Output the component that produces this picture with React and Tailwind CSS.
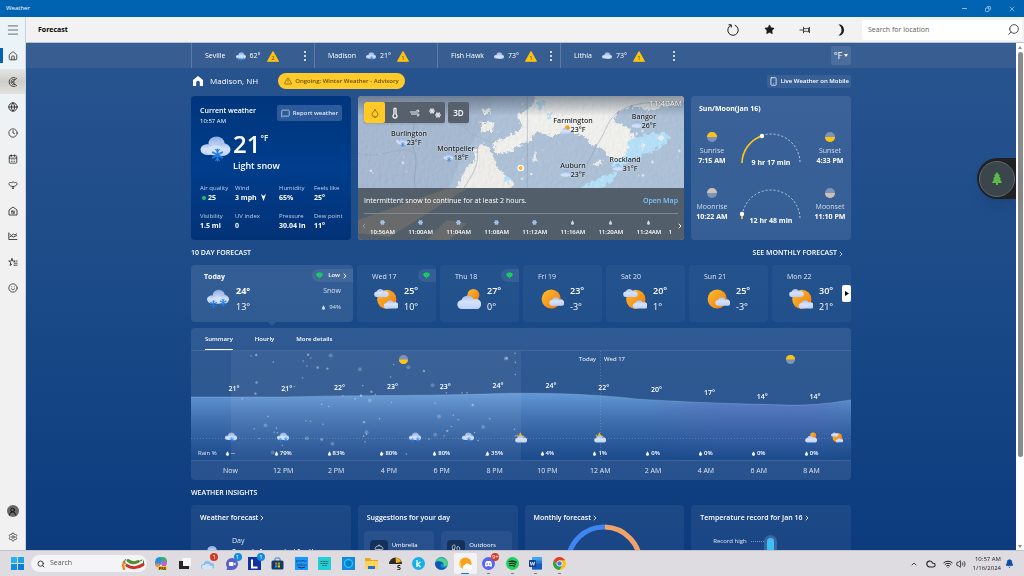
import React, { useState } from 'react';
import {
  Home, Clock, CalendarDays, Smile, Settings, UserRound, Globe,
  Menu, Search, Star, Minus, Copy, X, ChevronRight, ChevronLeft, ChevronUp,
  TriangleAlert, MessageSquare, Smartphone, Droplet, Thermometer, Wind, Snowflake,
  Wifi, Volume2, Bell, Umbrella, Footprints, Cloud,
} from 'lucide-react';

// --- data ---
const PLACES = [
  { name: 'Seville', temp: '62°', alerts: 2, icon: 'rain', menu: true },
  { name: 'Madison', temp: '21°', alerts: 1, icon: 'snow', menu: false },
  { name: 'Fish Hawk', temp: '73°', alerts: 1, icon: 'cloud', menu: true },
  { name: 'Lithia', temp: '73°', alerts: 1, icon: 'cloud', menu: true },
];

const STATS = [
  { label: 'Air quality', value: '25', dot: true },
  { label: 'Wind', value: '3 mph', arrow: true },
  { label: 'Humidity', value: '65%' },
  { label: 'Feels like', value: '25°' },
  { label: 'Visibility', value: '1.5 mi' },
  { label: 'UV index', value: '0' },
  { label: 'Pressure', value: '30.04 in' },
  { label: 'Dew point', value: '11°' },
];

const CITIES = [
  { name: 'Burlington', temp: '23°F', icon: 'snow', x: 51, y: 34 },
  { name: 'Montpelier', temp: '18°F', icon: 'snow', x: 98, y: 49 },
  { name: 'Farmington', temp: '23°F', icon: 'partly', x: 215, y: 21 },
  { name: 'Bangor', temp: '26°F', icon: 'cloud', x: 286, y: 17 },
  { name: 'Auburn', temp: '23°F', icon: 'cloud', x: 215, y: 66 },
  { name: 'Rockland', temp: '31°F', icon: 'cloud', x: 267, y: 60 },
];

const MAP_TIMES = ['10:56AM', '11:00AM', '11:04AM', '11:08AM', '11:12AM', '11:16AM', '11:20AM', '11:24AM'];

const DAYS = [
  { day: 'Wed 17', hi: '25°', lo: '10°', icon: 'mostly', pollen: true },
  { day: 'Thu 18', hi: '27°', lo: '0°', icon: 'partly', pollen: true },
  { day: 'Fri 19', hi: '23°', lo: '-3°', icon: 'sunny' },
  { day: 'Sat 20', hi: '20°', lo: '1°', icon: 'mostly' },
  { day: 'Sun 21', hi: '25°', lo: '-3°', icon: 'sunny' },
  { day: 'Mon 22', hi: '30°', lo: '21°', icon: 'mostly' },
];

const HOURS = [
  { time: 'Now', temp: '21°', rain: '--', y: 33 },
  { time: '12 PM', temp: '21°', rain: '79%', y: 33 },
  { time: '2 PM', temp: '22°', rain: '83%', y: 32 },
  { time: '4 PM', temp: '23°', rain: '80%', y: 31 },
  { time: '6 PM', temp: '23°', rain: '80%', y: 31 },
  { time: '8 PM', temp: '24°', rain: '35%', y: 30 },
  { time: '10 PM', temp: '24°', rain: '4%', y: 30 },
  { time: '12 AM', temp: '22°', rain: '1%', y: 32 },
  { time: '2 AM', temp: '20°', rain: '0%', y: 34 },
  { time: '4 AM', temp: '17°', rain: '0%', y: 37 },
  { time: '6 AM', temp: '14°', rain: '0%', y: 41 },
  { time: '8 AM', temp: '14°', rain: '0%', y: 41 },
];

// x is the centre of the icon on the 660 wide chart
const HOUR_ICONS = [
  { x: 40, icon: 'snow' },
  { x: 92, icon: 'heavy' },
  { x: 224, icon: 'heavy' },
  { x: 277, icon: 'snow' },
  { x: 330, icon: 'night' },
  { x: 409, icon: 'night' },
  { x: 620, icon: 'partly' },
  { x: 646, icon: 'mostly' },
];

const rand = (n) => {
  const v = Math.sin(n * 127.1 + 11.7) * 43758.5453;
  return v - Math.floor(v);
};

const FLAKES = Array.from({ length: 84 }, (_, i) => ({
  x: 42 + rand(i) * 286,
  y: 2 + rand(i + 200) * 103,
  r: i % 6 === 0 ? 2 : i % 3 === 0 ? 1.2 : 0.8,
  o: i % 6 === 0 ? 0.22 : 0.4,
}));

const MAP_FLAKES = Array.from({ length: 34 }, (_, i) => ({
  x: 30 + rand(i + 400) * 960,
  y: 24 + rand(i + 600) * 260,
}));

// --- weather icons ---
const CLOUD_PATH = 'M7 17a5 5 0 0 1-.6-10A7 7 0 0 1 19.500 6.200A5.500 5.500 0 0 1 25 17Z';

function Defs() {
  return (
    <svg width="0" height="0" className="absolute" aria-hidden="true">
      <defs>
        <linearGradient id="cloud" x1="0" y1="0" x2="0" y2="1">
          <stop offset="0" stopColor="#a3bdf0" />
          <stop offset="0.45" stopColor="#d5e2fa" />
          <stop offset="1" stopColor="#bfd2f6" />
        </linearGradient>
        <linearGradient id="cloudBack" x1="0" y1="0" x2="0" y2="1">
          <stop offset="0" stopColor="#8babe6" />
          <stop offset="1" stopColor="#e2ebfb" />
        </linearGradient>
        <linearGradient id="sun" x1="0" y1="0" x2="1" y2="1">
          <stop offset="0" stopColor="#ffbe2e" />
          <stop offset="1" stopColor="#f0780f" />
        </linearGradient>
      </defs>
    </svg>
  );
}

function Flake({ x, y, s = 4 }) {
  return (
    <g transform={`translate(${x} ${y})`} stroke="#1f7fe8" strokeWidth={s * 0.32} strokeLinecap="round" fill="none">
      <path d={`M0 ${-s}V${s}M${-s * 0.87} ${-s / 2}L${s * 0.87} ${s / 2}M${-s * 0.87} ${s / 2}L${s * 0.87} ${-s / 2}`} />
      <path strokeWidth={s * 0.2} d={`M${-s * 0.35} ${-s}L0 ${-s * 0.6}L${s * 0.35} ${-s}M${-s * 0.35} ${s}L0 ${s * 0.6}L${s * 0.35} ${s}`} />
    </g>
  );
}

function WeatherIcon({ type, className }) {
  return (
    <svg viewBox="0 0 30 26" className={className} aria-hidden="true">
      {type === 'sunny' && (
        <>
          <circle cx="14" cy="13" r="12" fill="url(#sun)" />
          <path d={CLOUD_PATH} fill="url(#cloud)" transform="translate(10.500 9.500) scale(.7)" />
        </>
      )}
      {type === 'mostly' && (
        <>
          <circle cx="16" cy="13.500" r="12" fill="url(#sun)" />
          <path d={CLOUD_PATH} fill="url(#cloud)" transform="translate(-1 -1) scale(.68)" />
          <path d={CLOUD_PATH} fill="url(#cloud)" transform="translate(11 13) scale(.7)" />
        </>
      )}
      {type === 'partly' && (
        <>
          <circle cx="20.500" cy="8" r="7.500" fill="url(#sun)" />
          <path d={CLOUD_PATH} fill="url(#cloud)" transform="translate(-1.500 6.500) scale(1.120)" />
        </>
      )}
      {type === 'night' && (
        <>
          <path d="M14 0c1 6 4 9 10 9-2 4-6 6-10 4s-5-8 0-13ZM2 9l4-1 1-4 1 4 4 1-4 1-1 4-1-4Z" fill="#f3b431" />
          <path d={CLOUD_PATH} fill="url(#cloud)" transform="translate(-1.500 6.500) scale(1.120)" />
        </>
      )}
      {['cloud', 'snow', 'heavy', 'rain'].includes(type) && (
        <>
          <ellipse cx="16" cy="7.500" rx="8" ry="7" fill="url(#cloudBack)" />
          <ellipse cx="7.500" cy="13.500" rx="7.500" ry="5.500" fill="url(#cloud)" />
          <ellipse cx="22" cy="13.500" rx="8" ry="6.500" fill="url(#cloud)" />
          <ellipse cx="15" cy="14.500" rx="9" ry="5" fill="#d3e0f9" />
        </>
      )}
      {type === 'snow' && <Flake x={17} y={19} s={5.5} />}
      {type === 'heavy' && (
        <>
          <Flake x={9} y={20} s={4.5} />
          <Flake x={22} y={18} s={4.5} />
        </>
      )}
      {type === 'rain' && <path d="M8 17v6M15 18v6M22 17v6" stroke="#3d9bff" strokeWidth="3" strokeLinecap="round" />}
    </svg>
  );
}

// half disc used by the sunrise / sunset marks
function HalfDisc({ color, up, className }) {
  return (
    <svg viewBox="0 0 10 10" className={className} aria-hidden="true">
      <circle cx="5" cy="5" r="5" fill="#7d93b8" />
      <path d={up ? 'M0 5a5 5 0 0 1 10 0Z' : 'M0 5a5 5 0 0 0 10 0Z'} fill={color} />
    </svg>
  );
}

function Warning({ count }) {
  return (
    <svg viewBox="0 0 12 11" className="h-[11px] w-3" aria-label={`${count} alerts`}>
      <path d="M6 .8 11.300 10.200H.7Z" fill="#fdc40f" stroke="#fdc40f" strokeWidth="1.200" strokeLinejoin="round" />
      <text x="6" y="9" textAnchor="middle" fontSize="6" fill="#5b4400">{count}</text>
    </svg>
  );
}

function Drop({ className }) {
  return (
    <svg viewBox="0 0 4 6" className={className} aria-hidden="true">
      <path d="M2 0C3 2 4 3 4 4a2 2 0 0 1-4 0C0 3 1 2 2 0Z" fill="currentColor" />
    </svg>
  );
}

function Pollen() {
  return (
    <svg viewBox="0 0 7 7" className="size-[7px]" aria-hidden="true">
      <path d="M3.500 7V3" stroke="#19a85f" strokeWidth=".8" />
      <path d="M.3 2.500C.8 1 2 .5 3.500.5S6.200 1 6.700 2.500C6.500 4.300 5 5.300 3.500 5.500 2 5.300.5 4.300.3 2.500Z" fill="#17d562" />
      <path d="M2 2.300h.8M4.200 2.300H5M3.100 3.800h.8" stroke="#0d8c4d" strokeWidth=".6" />
    </svg>
  );
}

// --- shell ---
function TitleBar() {
  return (
    <div className="flex h-[17px] shrink-0 items-center bg-[#0063b1] text-white">
      <span className="px-1.5 text-[6px]">Weather</span>
      <div className="ml-auto flex">
        <button aria-label="Minimize" className="flex h-[17px] w-6 items-center justify-center"><Minus size={7} /></button>
        <button aria-label="Restore" className="flex h-[17px] w-6 items-center justify-center"><Copy size={6} className="-scale-x-100" /></button>
        <button aria-label="Close" className="flex h-[17px] w-6 items-center justify-center"><X size={8} strokeWidth={1.5} /></button>
      </div>
    </div>
  );
}

function RadarIcon() {
  return (
    <svg viewBox="0 0 10 10" className="size-[10px]" fill="none" stroke="#4a4a4a" strokeWidth="1">
      <path d="M7.500.9A4.500 4.500 0 1 0 7.500 9.100M9 1 4.500 5l4.500 4M7 2.600A2.700 2.700 0 1 0 7 7.400" />
      <path d="M6.300 4.300a1 1 0 1 0 0 1.400" />
    </svg>
  );
}

const NAV = [
  { label: 'Forecast', icon: <Home size={10} strokeWidth={2} /> },
  { label: 'Maps', icon: <RadarIcon /> },
  { label: '3D Maps', icon: <Globe size={10} strokeWidth={2.4} /> },
  { label: 'Hourly Forecast', icon: <Clock size={10} strokeWidth={2} /> },
  { label: 'Monthly Forecast', icon: <CalendarDays size={10} strokeWidth={2} /> },
  {
    label: 'Pollen',
    icon: (
      <svg viewBox="0 0 10 10" className="size-[10px]" fill="none" stroke="currentColor" strokeWidth=".9">
        <path d="M.8 3.500C2 2 3 2.500 3.500 2.800 4 1.700 6 1.700 6.500 2.800 7 2.500 8 2 9.200 3.500 9 5.500 7 6.300 5 6.500 3 6.300 1 5.500.8 3.500ZM5 6.500V9M3.800 7.600 5 8.600l1.200-1" />
      </svg>
    ),
  },
  {
    label: 'Life',
    icon: (
      <svg viewBox="0 0 10 10" className="size-[10px]" fill="none" stroke="currentColor" strokeWidth=".9">
        <path d="M1 9V4L5 1l4 3V9ZM3 5.200h4M3 7h4M4.200 4.500v1.300M5.900 6.300v1.300" />
      </svg>
    ),
  },
  {
    label: 'Historical Weather',
    icon: (
      <svg viewBox="0 0 10 10" className="size-[10px]" fill="none" stroke="currentColor" strokeWidth=".9">
        <path d="M.8 1.500v7h8.500M1.500 6 3.500 5l2 1L9 4.500M1.500 3 3.500 4.500 5.500 3 7 4l2-1.500" />
      </svg>
    ),
  },
  {
    label: 'Favorites',
    icon: (
      <svg viewBox="0 0 10 10" className="size-[10px]" fill="none" stroke="currentColor" strokeWidth=".9">
        <path d="M5.500 5.500 7 4H4.800L4 1.300 3.200 4H.7l2 1.700L2 8.500 4 7M6 6.200h3.500M5.500 8.200h4M7.500 4h2" />
      </svg>
    ),
  },
  { label: 'Send Feedback', icon: <Smile size={10} strokeWidth={2} /> },
];

function Sidebar() {
  return (
    <nav className="flex w-[26px] shrink-0 flex-col justify-between border-r border-[#c9d3e0] bg-linear-to-b from-[#e9f4f9] via-[#f1f1f1] via-30% to-[#f1f1f1] text-[#333]">
      <div className="flex h-[284px] flex-col">
        <button aria-label="Menu" className="flex flex-1 items-center justify-center"><Menu size={14} strokeWidth={1.2} /></button>
        {NAV.map((item, i) => (
          <a
            key={item.label}
            href="#"
            aria-label={item.label}
            className={
              i === 0
                ? 'relative flex flex-1 items-center justify-center before:absolute before:left-0 before:h-[15px] before:w-[3px] before:bg-[#0063b1]'
                : i === 1
                  ? 'flex flex-1 items-center justify-center bg-linear-to-b from-[#e3e6e6] via-[#cfcdc8] to-[#e2e2e0]'
                  : 'flex flex-1 items-center justify-center'
            }
          >
            {item.icon}
          </a>
        ))}
      </div>
      <div>
        <button aria-label="Account" className="flex h-[26px] w-full items-center justify-center">
          <span className="flex size-3 items-center justify-center rounded-full bg-[#696969] text-black"><UserRound size={9} /></span>
        </button>
        <button aria-label="Settings" className="flex h-[26px] w-full items-center justify-center"><Settings size={10} strokeWidth={1.8} /></button>
      </div>
    </nav>
  );
}

function Header() {
  return (
    <header className="flex h-[26px] shrink-0 items-center border-b border-[#b4c3da] bg-[#f2f2f2] pr-0.5 pl-3 text-[#1c1c1c]">
      <h1 className="pt-0.5 text-[7px] font-bold text-black">Forecast</h1>
      <div className="ml-auto flex items-center">
        <button aria-label="Refresh" className="flex w-9 justify-center">
          <svg viewBox="0 0 12 12" className="size-3" fill="none" stroke="currentColor" strokeWidth="1">
            <path d="M7.800 1.200a5.200 5.200 0 1 1-3.800.1M1.500.8h2.800v2.800" />
          </svg>
        </button>
        <button aria-label="Favorite" className="flex w-9 justify-center"><Star size={11} fill="currentColor" strokeWidth={1} /></button>
        <button aria-label="Pin" className="flex w-9 justify-center">
          <svg viewBox="0 0 12 8" className="h-2 w-3" fill="none" stroke="currentColor" strokeWidth=".8">
            <path d="M.5 4h4M4.500.8v6.400M4.500 2.300c2 1 3.500.2 5-.3v4c-1.500-.5-3-1.300-5-.3M10.500 1v6" />
          </svg>
        </button>
        <button aria-label="Dark mode" className="flex w-9 justify-center">
          <svg viewBox="0 0 8 12" className="h-3 w-2"><path d="M1.500.5C5 0 7 3 7 6s-2 6-5.500 5.500C4 9.500 4.500 8 4.500 6S4 2.500 1.500.5Z" fill="currentColor" /></svg>
        </button>
      </div>
      <label className="ml-[3px] flex h-5 w-40 items-center rounded-xs bg-white px-1.5">
        <input type="search" aria-label="Search for location" placeholder="Search for location" className="min-w-0 flex-1 pt-0.5 text-[7px] outline-none placeholder:text-[#5c5c5c]" />
        <Search size={13} strokeWidth={1.6} className="-mr-1 -scale-x-100 text-[#333]" />
      </label>
    </header>
  );
}

function PlacesBar() {
  return (
    <div className="bg-[#385d90]">
      <div className="mx-auto flex h-[25px] w-[660px] items-center text-[7px]">
        {PLACES.map((p) => (
          <div key={p.name} className="flex h-full w-[123px] items-center border-l border-[#5c7ba6] pr-1.5 pl-[13px]">
            <a href="#" className="flex items-center pt-0.5">
              <span>{p.name}</span>
              <WeatherIcon type={p.icon} className="ml-2.5 h-[9px] w-[10px]" />
              <span className="mr-1.5 ml-1">{p.temp}</span>
              <Warning count={p.alerts} />
            </a>
            {p.menu && (
              <button aria-label={`${p.name} options`} className="ml-auto flex flex-col gap-0.5 px-0.5">
                <i className="size-[2px] rounded-full bg-white" />
                <i className="size-[2px] rounded-full bg-white" />
                <i className="size-[2px] rounded-full bg-white" />
              </button>
            )}
          </div>
        ))}
        <button className="ml-auto flex h-[19px] w-5 items-center justify-center gap-0.5 rounded-xs bg-[#4c6e9d] text-[9px]">
          °F
          <svg viewBox="0 0 4 3" className="h-[3px] w-1"><path d="M0 0h4L2 3Z" fill="white" /></svg>
        </button>
      </div>
    </div>
  );
}

// --- top cards ---
function CurrentWeather() {
  return (
    <section className="w-40 rounded bg-linear-to-b from-[#00367c] via-[#003d8c] via-50% to-[#033276] px-[9px] pt-[9px]">
      <div className="flex justify-between">
        <div className="pt-px leading-[10px]">
          <h2 className="text-[7px] font-semibold">Current weather</h2>
          <p className="text-[6px]">10:57 AM</p>
        </div>
        <button className="flex h-4 items-center gap-[3px] rounded-xs bg-[#2d5a9b] px-1 text-[6px] font-semibold text-[#e3e9f3]">
          <MessageSquare size={9} strokeWidth={1.8} />
          Report weather
        </button>
      </div>
      <div className="flex items-start">
        <WeatherIcon type="snow" className="mt-[10px] h-[26px] w-[31px]" />
        <div className="pt-1 pl-0.5">
          <div className="flex items-start font-semibold">
            <span className="text-[24px] leading-[28px]">21</span>
            <sup className="top-0 pt-1 text-[8px] leading-[8px]">°F</sup>
          </div>
          <p className="pt-0.5 text-[9px] leading-[12px] font-semibold">Light snow</p>
        </div>
      </div>
      <dl className="grid grid-cols-[35px_44px_35px_28px] gap-y-2.5 pt-3 whitespace-nowrap">
        {STATS.map((s) => (
          <div key={s.label} className="leading-[9px]">
            <dt className="text-[6px] text-[#c3d2ea]">{s.label}</dt>
            <dd className="flex items-center text-[7px] font-bold">
              {s.dot && <i className="mr-0.5 ml-0.5 size-[4px] rounded-full bg-[#1fc36b]" />}
              {s.value}
              {s.arrow && <svg viewBox="0 0 5 7" className="ml-1 h-[7px] w-[5px]"><path d="M0 0 2.500 2 5 0 2.500 7Z" fill="white" /></svg>}
            </dd>
          </div>
        ))}
      </dl>
    </section>
  );
}

function MapArt() {
  return (
    <svg viewBox="24 18 978 432" preserveAspectRatio="xMidYMid slice" className="absolute inset-0 size-full" aria-hidden="true">
      <defs>
        <filter id="coast" x="-5%" y="-5%" width="110%" height="110%">
          <feTurbulence type="fractalNoise" baseFrequency="0.09" numOctaves="3" seed="6" />
          <feDisplacementMap in="SourceGraphic" scale="22" xChannelSelector="R" yChannelSelector="G" />
        </filter>
        <filter id="relief" x="0" y="0" width="100%" height="100%">
          <feTurbulence type="fractalNoise" baseFrequency="0.1 0.07" numOctaves="3" seed="9" />
          <feDiffuseLighting surfaceScale="2" lightingColor="#ffffff">
            <feDistantLight azimuth="215" elevation="62" />
          </feDiffuseLighting>
        </filter>
        <linearGradient id="mapShade" x1="0" y1="0" x2="0" y2="1">
          <stop offset="0" stopColor="#49576a" stopOpacity=".6" />
          <stop offset="1" stopColor="#49576a" stopOpacity="0" />
        </linearGradient>
      </defs>
      <rect x="24" y="18" width="978" height="432" fill="#b0c4da" />
      <path d="M24 18h400v60l-80 110-60 130H24Z" fill="#a6b9d1" opacity=".7" />
      <g filter="url(#coast)">
        <path fill="#f3f3f0" d="M560 0 545 50 500 78 520 110 480 140 430 158 436 192 470 188 505 170 545 150 560 122 610 142 650 118 700 140 725 165 760 175 800 235 830 190 856 140 832 112 790 92 800 70 850 50 900 62 1030 30V0Z" />
        <path fill="#f1f0ed" d="M380 165 412 168 430 200 442 232 470 258 490 272 478 330 300 340 330 270 350 232 372 215Z" />
        <path fill="#f1f0ed" d="M392 96h38v30h-38ZM398 56h24v16h-24ZM732 212h26v12h-26ZM548 190h12v22h-12Z" />
        <path fill="#b7e3fb" d="M838 146 900 132 940 128 962 138 950 158 910 184 880 196 850 205 812 232 780 226 826 196Z" />
        <path fill="#b7e3fb" d="M680 300 730 272 770 256 804 244 790 272 750 300ZM560 36l20-8 6 22-22 8ZM590 70h22l-12 18ZM462 260l20 5-8 14-14-6Z" />
        <path fill="#f1f1ee" d="M874 150l14 20-12 12ZM920 150l14-16 6 20Z" />
      </g>
      <g fill="none" stroke="#8798ad" strokeWidth="2" opacity=".7">
        <path d="M186 70c16 40-10 70 6 110s-6 80 4 114M532 18v276M1002 40c-90-6-150-4-190 22-40 20-40 60-70 100l-30 60M382 170c8 60-20 90-40 124" />
        <path d="M24 190c80 20 120-30 170 0M300 60l60 70 70 30" strokeDasharray="5 4" />
      </g>
      <rect x="24" y="18" width="978" height="432" filter="url(#relief)" opacity=".35" style={{ mixBlendMode: 'multiply' }} />
      {MAP_FLAKES.map((f, i) => <circle key={i} cx={f.x} cy={f.y} r={i % 3 ? 2 : 4} fill="white" opacity=".6" />)}
      <rect x="24" y="18" width="978" height="60" fill="url(#mapShade)" />
      <rect x="24" y="294" width="978" height="156" fill="#33516f" />
      <path d="M24 430V390L290 296h60L120 440ZM230 450l60-60 60 10-50 50Z" fill="#e0a868" />
      <circle cx="512" cy="234" r="10" fill="white" />
      <circle cx="512" cy="234" r="6" fill="#f4b832" />
    </svg>
  );
}

function MapCard() {
  return (
    <section className="relative flex min-w-0 flex-1 flex-col overflow-hidden rounded">
      <MapArt />
      {CITIES.map((c) => (
        <div
          key={c.name}
          className="absolute -translate-x-1/2 text-center text-[7px] leading-[8px] font-semibold whitespace-nowrap text-[#26292e] [text-shadow:0_0_2px_white]"
          style={{ left: c.x, top: c.y }}
        >
          {c.name}
          <div className="flex items-center justify-center">
            <WeatherIcon type={c.icon} className="h-[9px] w-[10px]" />
            {c.temp}
          </div>
        </div>
      ))}
      <span className="absolute top-0.5 right-0.5 text-[8px] leading-[9px] text-[#eef1f5] [text-shadow:0_0_2px_#444]">11:40AM</span>
      <div className="relative flex flex-1 items-start gap-[3px] p-1.5">
        <div className="flex overflow-hidden rounded-xs bg-[#56616d] shadow">
          <button aria-label="Precipitation" className="flex size-[21px] items-center justify-center rounded-xs bg-[#ffca28] text-[#5a4300]"><Droplet size={10} strokeWidth={1.5} /></button>
          <button aria-label="Temperature" className="flex h-[21px] w-5 items-center justify-center"><Thermometer size={12} strokeWidth={2.5} /></button>
          <button aria-label="Wind" className="flex h-[21px] w-5 items-center justify-center">
            <svg viewBox="0 0 10 8" className="h-2 w-2.5" fill="none" stroke="currentColor" strokeWidth=".9"><path d="M0 3h7.500q2 0 1.500-1.200T6.500 1.500M1 5h7q1.500.2 1 1.300T7 6.800" /></svg>
          </button>
          <button aria-label="Snow" className="flex h-[21px] w-5 items-center justify-center">
            <Snowflake size={6} className="mb-1" strokeWidth={3} />
            <Snowflake size={6} className="mt-1" strokeWidth={3} />
          </button>
        </div>
        <button className="size-[21px] rounded-xs bg-[#56616d] text-[8px] font-semibold shadow">3D</button>
      </div>
      <div className="relative h-[52px] bg-[#56616b]/88 px-1.5 pt-[7px]">
        <div className="flex items-center justify-between border-b border-[#7b8791] pb-[7px] text-[7px] leading-[11px]">
          <p>Intermittent snow to continue for at least 2 hours.</p>
          <a href="#" className="font-semibold text-[#7cc6ff]">Open Map</a>
        </div>
        <div className="flex items-center">
          <button aria-label="Earlier" className="-mr-1 -ml-1 text-[#a7b0ba]"><ChevronLeft size={8} /></button>
          <ol className="flex flex-1 justify-between overflow-hidden pt-1">
            {MAP_TIMES.map((t, i) => (
              <li key={t} className="flex w-[37px] shrink-0 flex-col items-center text-[6px] leading-[10px] font-semibold">
                {i < 5 ? <Snowflake size={5} strokeWidth={4} className="mt-0.5 mb-0.5 text-[#a9d2fa]" /> : <Drop className="mt-0.5 mb-0.5 h-[5px] w-[3px] text-[#d6dbe0]" />}
                {t}
              </li>
            ))}
            <li className="pt-[9px] pr-1 text-[6px] leading-[10px] font-semibold">1</li>
          </ol>
          <button aria-label="Later" className="-mr-1.5"><ChevronRight size={8} strokeWidth={3} /></button>
        </div>
      </div>
    </section>
  );
}

function ArcRow({ color, left, right, middle, sun }) {
  return (
    <div className="flex h-14 items-start justify-between text-center">
      <div className="flex w-[42px] flex-col items-center text-[7px] leading-[10px]">
        <HalfDisc color={color} up className="mb-1 size-2.5" />
        <span className="text-[#d3dcea]">{left[0]}</span>
        <b>{left[1]}</b>
      </div>
      <div className="flex flex-col items-center">
        <svg viewBox="0 0 64 32" className="h-8 w-16" fill="none">
          <path d="M3 31a29 29 0 0 1 58 0" stroke="#c3cfe0" strokeDasharray="2 2" strokeWidth="1" />
          {sun ? (
            <>
              <path d="M3 31A29 29 0 0 1 23 4" stroke="#fdc40f" strokeWidth="1.600" />
              <circle cx="23" cy="4" r="2.200" fill="white" />
            </>
          ) : (
            <>
              <path d="M3 31v-5" stroke="#fdc40f" strokeWidth="1.600" />
              <circle cx="3" cy="26" r="2.200" fill="white" />
            </>
          )}
        </svg>
        <b className={sun ? '-mt-1.5 text-[7px] leading-[10px]' : '-mt-1 text-[7px] leading-[10px]'}>{middle}</b>
      </div>
      <div className="flex w-[42px] flex-col items-center text-[7px] leading-[10px]">
        <HalfDisc color={color} className="mb-1 size-2.5" />
        <span className="text-[#d3dcea]">{right[0]}</span>
        <b>{right[1]}</b>
      </div>
    </div>
  );
}

function SunMoon() {
  return (
    <section className="w-40 rounded bg-white/10">
      <h2 className="px-2 pt-2 pb-[18px] text-[7px] leading-[10px] font-bold">Sun/Moon(Jan 16)</h2>
      <ArcRow sun color="#fdc40f" left={['Sunrise', '7:15 AM']} right={['Sunset', '4:33 PM']} middle="9 hr 17 min" />
      <ArcRow color="#cdbfb4" left={['Moonrise', '10:22 AM']} right={['Moonset', '11:10 PM']} middle="12 hr 48 min" />
    </section>
  );
}

// --- 10 day forecast ---
function Temps({ hi, lo, bold }) {
  return (
    <div className="pt-px text-[9px] leading-4">
      <div className={bold ? 'font-bold' : 'font-semibold'}>{hi}</div>
      <div>{lo}</div>
    </div>
  );
}

function TenDay() {
  return (
    <section>
      <div className="flex h-[25px] items-center justify-between pt-0.5 text-[7px] font-semibold">
        <h2>10 DAY FORECAST</h2>
        <a href="#" className="flex items-center pr-1.5">SEE MONTHLY FORECAST<ChevronRight size={8} /></a>
      </div>
      <div className="relative flex h-[57px] gap-1">
        <div className="relative w-[162px] rounded bg-white/10 pt-1.5 pl-[13px] after:absolute after:top-full after:left-[77px] after:border-x-4 after:border-t-4 after:border-x-transparent after:border-t-white/10">
          <div className="flex items-center justify-between">
            <span className="text-[7px] leading-[11px] font-bold">Today</span>
            <button className="-mt-1 -mb-0.5 flex h-[13px] items-center gap-[5px] rounded-l-full bg-white/8 pr-1 pl-1 text-[6px] font-semibold">
              <Pollen />
              Low
              <ChevronRight size={8} strokeWidth={3} className="-ml-1" />
            </button>
          </div>
          <div className="flex">
            <WeatherIcon type="heavy" className="mt-1.5 mr-[7px] ml-[3px] h-[22px] w-[22px]" />
            <Temps hi="24°" lo="13°" bold />
            <div className="ml-auto pt-px pr-3 text-right text-[7px] leading-4 text-[#d8e1ee]">
              <div>Snow</div>
              <div className="flex items-center justify-end gap-1 text-[6px] leading-4"><Drop className="h-[5px] w-[3px]" />94%</div>
            </div>
          </div>
        </div>
        {DAYS.map((d) => (
          <a key={d.day} href="#" className="min-w-0 flex-1 rounded bg-white/4 pt-1.5">
            <div className="flex items-center justify-between pl-[15px] text-[#dde5f0]">
              <span className="text-[7px] leading-[11px]">{d.day}</span>
              {d.pollen && (
                <span className="-mt-1 -mb-0.5 flex h-[13px] items-center rounded-l-full bg-white/8 pr-1.5 pl-[5px]"><Pollen /></span>
              )}
            </div>
            <div className="flex pl-[17px]">
              <WeatherIcon type={d.icon} className="mt-1.5 mr-1.5 h-[22px] w-6" />
              <Temps hi={d.hi} lo={d.lo} />
            </div>
          </a>
        ))}
        <button aria-label="Next days" className="absolute top-5 right-0 flex h-[17px] w-[9px] items-center justify-center rounded-xs bg-white">
          <svg viewBox="0 0 4 5" className="h-[5px] w-1"><path d="M0 0l4 2.500L0 5Z" fill="black" /></svg>
        </button>
      </div>
    </section>
  );
}

// --- hourly chart ---
function HourlyChart() {
  const [tab, setTab] = useState('Summary');
  return (
    <section className="mt-1.5 overflow-hidden rounded bg-white/10">
      <div role="tablist" className="flex h-[23px] gap-[22px] border-b border-white/10 px-3.5 text-[6px] font-semibold">
        {['Summary', 'Hourly', 'More details'].map((t) => (
          <button key={t} role="tab" aria-selected={tab === t} onClick={() => setTab(t)} className={tab === t ? 'border-b border-white pt-0.5' : 'border-b border-transparent pt-0.5'}>
            {t}
          </button>
        ))}
      </div>
      <div className="relative h-[109px]">
        <svg viewBox="0 0 660 109" preserveAspectRatio="none" className="absolute inset-0 size-full" aria-hidden="true">
          <defs>
            <linearGradient id="wave" x1="0" y1="0" x2="0" y2="1">
              <stop offset="0" stopColor="#6a9fdd" stopOpacity=".9" />
              <stop offset=".4" stopColor="#4a7bbd" stopOpacity=".7" />
              <stop offset="1" stopColor="#12458a" stopOpacity=".6" />
            </linearGradient>
            <linearGradient id="dusk" x1="0" y1="0" x2="1" y2="0">
              <stop offset=".7" stopColor="#5a5fb4" stopOpacity="0" />
              <stop offset=".8" stopColor="#5a5fb4" stopOpacity=".35" />
              <stop offset=".95" stopColor="#5a5fb4" stopOpacity=".35" />
              <stop offset="1" stopColor="#5a5fb4" stopOpacity="0" />
            </linearGradient>
            <linearGradient id="fade" x1="0" y1="0" x2="0" y2="1">
              <stop offset=".4" stopColor="white" />
              <stop offset="1" stopColor="black" />
            </linearGradient>
            <mask id="duskMask"><rect width="660" height="109" fill="url(#fade)" /></mask>
          </defs>
          <path d="M0 46h95c80-2 140-1 200-3 50-2 110 0 150 5 80 5 120 5 150 6s50-3 65-5v60H0Z" fill="url(#wave)" />
          <path d="M0 46h95c80-2 140-1 200-3 50-2 110 0 150 5 80 5 120 5 150 6s50-3 65-5v60H0Z" fill="url(#dusk)" mask="url(#duskMask)" />
          <path d="M0 46h95c80-2 140-1 200-3 50-2 110 0 150 5 80 5 120 5 150 6s50-3 65-5" fill="none" stroke="#8fb4e2" strokeOpacity=".4" />
          <rect x="40" y="0" width="290" height="109" fill="white" opacity=".06" />
          <path d="M409.500 0v109M0 87.500h660" stroke="#9db6d8" strokeOpacity=".35" strokeDasharray="1 2" />
          {FLAKES.map((f, i) => <circle key={i} cx={f.x} cy={f.y} r={f.r} fill="white" opacity={f.o} />)}
        </svg>
        <div className="relative grid h-full grid-cols-12 px-[13px]">
          {HOURS.map((h) => (
            <div key={h.time} className="flex flex-col items-center text-[7px] leading-[10px] font-semibold" style={{ paddingTop: h.y }}>
              <span className="pl-[7px]">{h.temp}</span>
              <span className="mt-auto flex items-center gap-0.5 pb-0.5 text-[6px]"><Drop className="h-[5px] w-[3px]" />{h.rain}</span>
            </div>
          ))}
        </div>
        <span className="absolute bottom-0.5 left-[7px] text-[6px] leading-[10px] text-[#dde6f2]">Rain %</span>
        <span className="absolute top-[3px] right-[255px] text-[6px] leading-[10px]">Today</span>
        <span className="absolute top-[3px] left-[413px] text-[6px] leading-[10px]">Wed 17</span>
        <HalfDisc color="#fdc40f" className="absolute top-1 left-[208px] size-[9px]" />
        <HalfDisc color="#fdc40f" up className="absolute top-1 left-[595px] size-[9px]" />
        {HOUR_ICONS.map((h) => (
          <div key={h.x} className="absolute top-[81px] -translate-x-1/2" style={{ left: h.x }}>
            <WeatherIcon type={h.icon} className="h-[11px] w-3" />
          </div>
        ))}
      </div>
      <div className="grid h-5 grid-cols-12 items-center border-t border-white/10 px-[13px] pt-0.5 text-center text-[7px] text-[#dde6f2]">
        {HOURS.map((h) => <span key={h.time}>{h.time}</span>)}
      </div>
    </section>
  );
}

// --- insights ---
function InsightTitle({ children, link }) {
  return (
    <h3 className="px-[9px] text-[7px] leading-[10px] font-semibold whitespace-nowrap">
      {link ? <a href="#" className="inline-flex items-center">{children}<ChevronRight size={8} strokeWidth={2.5} /></a> : children}
    </h3>
  );
}

function Insights() {
  return (
    <section>
      <h2 className="flex h-[25px] items-center pt-0.5 text-[7px] font-semibold">WEATHER INSIGHTS</h2>
      <div className="grid grid-cols-4 gap-[7px]">
        <article className="h-40 rounded bg-white/6 pt-2">
          <InsightTitle link>Weather forecast</InsightTitle>
          <div className="flex gap-3 pt-3 pl-3">
            <WeatherIcon type="snow" className="mt-2.5 h-4 w-[17px]" />
            <div className="text-[7px] leading-[11px] whitespace-nowrap">
              <p className="text-[#dde6f2]">Day</p>
              <p className="font-semibold">Snow is forecasted for the</p>
            </div>
          </div>
        </article>
        <article className="h-40 rounded bg-white/6 pt-2">
          <InsightTitle>Suggestions for your day</InsightTitle>
          <div className="grid grid-cols-2 gap-[7px] px-1.5 pt-2 text-[6px]">
            <div className="flex h-9 items-start gap-1 rounded bg-white/6 px-1.5 pt-[9px]">
              <span className="flex size-[18px] items-center justify-center rounded bg-[#14305c]"><Umbrella size={10} strokeWidth={1.5} /></span>
              <span className="leading-[10px]">Umbrella</span>
            </div>
            <div className="flex h-9 items-start gap-1 rounded bg-white/6 px-1.5 pt-[9px]">
              <span className="flex size-[18px] items-center justify-center rounded bg-[#14305c]"><Footprints size={10} strokeWidth={1.5} /></span>
              <span className="leading-[10px]">Outdoors</span>
            </div>
          </div>
        </article>
        <article className="h-40 rounded bg-white/6 pt-2">
          <InsightTitle link>Monthly forecast</InsightTitle>
          <svg viewBox="0 0 80 80" className="mx-auto size-20" fill="none" strokeWidth="5">
            <path d="M4 40A36 36 0 0 1 41 4" stroke="#4186f0" />
            <path d="M41 4A36 36 0 0 1 76 40" stroke="#f0a26a" />
          </svg>
        </article>
        <article className="h-40 rounded bg-white/6 pt-2">
          <InsightTitle link>Temperature record for Jan 16</InsightTitle>
          <div className="flex items-start pt-3 pl-[22px] text-[6px]">
            <span className="pt-0.5 text-[#dde6f2]">Record high</span>
            <i className="mt-1.5 ml-1 w-[13px] border-t border-dotted border-[#7d97bd]" />
            <span className="h-24 w-[13px] rounded-full bg-[#3b66a4] p-[3px]"><i className="block h-full rounded-full bg-[#3dc0f3]" /></span>
          </div>
        </article>
      </div>
    </section>
  );
}

// --- taskbar ---
function Badge({ children, red }) {
  return (
    <span className={red
      ? 'absolute -top-1 -right-1 flex h-2 min-w-2 items-center justify-center rounded-full bg-[#d13a24] text-[6px] leading-none text-white'
      : 'absolute -top-1 -right-1 flex h-2 min-w-2 items-center justify-center rounded-full bg-[#0f8ce0] text-[6px] leading-none text-white'}
    >
      {children}
    </span>
  );
}

const APPS = [
  {
    name: 'Copilot',
    art: (
      <>
        <path d="M1 6C1 2 3 0 6 0l3 1-2 6-3 3C2 10 1 8 1 6Z" fill="#2b8de6" />
        <path d="M6 0h3c3 0 4 3 4 5H8Z" fill="#35b36a" />
        <path d="M13 5c0 4-2 5-4 5L7 7l1-3Z" fill="#c65bd0" />
        <path d="M1 7c1 3 2 3 5 3L5 6Z" fill="#f08a3c" />
        <rect x="4" y="9" width="9" height="4" rx="1" fill="#ffc220" />
        <text x="8.500" y="12.500" fontSize="4" fontWeight="700" textAnchor="middle" fill="#222">PRE</text>
      </>
    ),
  },
  { name: 'Task View', art: <><rect x="4" y="1" width="9" height="8" fill="#f7f7f7" /><path d="M1 4h4v5h6v3H1Z" fill="#262626" /></> },
  { name: 'Widgets', badge: '1', red: true, art: <><path d="M2.500 12a2.500 2.500 0 0 1 0-5 4 4 0 0 1 7.500-1A3 3 0 0 1 11 12Z" fill="#8fbdf2" /><path d="M2.500 12a2 2 0 0 1 1-4c3-2 5-1 6 1h2v3Z" fill="#d6e6fa" /></> },
  { name: 'Chat', badge: '1', art: <><path d="M1 7a6 6 0 1 1 6 6H1.500l.7-2.500A6 6 0 0 1 1 7Z" fill="#5b5fc7" /><rect x="4" y="5" width="4.500" height="4" rx="1" fill="white" /><path d="M9 6.500 10.500 5.500v3L9 7.500Z" fill="white" /></> },
  { name: 'L app', badge: '1', art: <><rect width="13" height="13" fill="#15339f" /><path d="M4 2.500v8h5.500" stroke="white" strokeWidth="2" fill="none" /></> },
  { name: 'Microsoft Store', art: <><path d="M4 4V2q0-1 1-1h3q1 0 1 1v2" fill="none" stroke="#2b7cd3" /><rect x=".5" y="3.500" width="12" height="9" rx="1.500" fill="#133a66" /><path d="M4 5.500h2.200v2.200H4Z" fill="#f35325" /><path d="M6.800 5.500H9v2.200H6.800Z" fill="#81bc06" /><path d="M4 8.300h2.200v2.200H4Z" fill="#05a6f0" /><path d="M6.800 8.300H9v2.200H6.800Z" fill="#ffba08" /></> },
  { name: 'Prime Video', art: <><rect width="13" height="13" fill="#1a98ff" /><text x="6.500" y="5" fontSize="4" textAnchor="middle" fill="#10243c">prime</text><text x="6.500" y="8.500" fontSize="4" textAnchor="middle" fill="#10243c">video</text><path d="M3 10q3.500 2 7 0" stroke="#10243c" fill="none" /></> },
  { name: 'Smart app', art: <><rect width="13" height="13" fill="#22cfd6" /><path d="M2.500 4.500h8M2.500 6.500h8M4 8.500h5" stroke="#17696f" strokeWidth="1.200" strokeDasharray="2 .6" /></> },
  { name: 'Alexa', art: <><rect width="13" height="13" fill="#1687d9" /><circle cx="6.500" cy="6.500" r="4" fill="#0a7bd0" stroke="#23c8f5" strokeWidth="1.500" /></> },
  { name: 'File Explorer', art: <><path d="M0 1h5l1 2h7v9H0Z" fill="#e8a520" /><path d="M0 4h13v8H0Z" fill="#ffd45c" /><path d="M3 9h7v3H3Z" fill="#1b78c9" /></> },
  { name: 'Norton', art: <><path d="M0 7a6.500 6.500 0 0 1 13 0Z" fill="#2b2b2b" /><path d="M6.500.5A6.500 6.500 0 0 1 12 5L7 6Z" fill="#f2b90f" /><text x="10" y="13" fontSize="7" fontWeight="700" textAnchor="middle" fill="#222">5</text></> },
  { name: 'K app', art: <><circle cx="6.500" cy="6.500" r="6.500" fill="#19b0e7" /><path d="M5 3v7M8.500 5 5.500 7.200 8.500 10" stroke="white" strokeWidth="1.300" fill="none" /></> },
  { name: 'Edge', art: <><circle cx="6.500" cy="6.500" r="6.500" fill="#1687d6" /><path d="M.7 4.500A6.500 6.500 0 0 1 13 7c0 2-2 2.500-4.500 2C9.500 6 6 3 .7 4.500Z" fill="#4fd08a" /><path d="M.1 6C2 4 7 4 8.500 7 7 6.500 5 7 5.500 9c.5 2 3.500 2.500 6 1.200C8 14.500 0 13 .1 6Z" fill="#0d57ad" /></> },
  { name: 'Weather', active: true, running: true, art: <><circle cx="6.500" cy="6.500" r="6" fill="#f9a11b" /><path d="M2 11a6 6 0 0 1-1-7c2 3 1 5 1 7Z" fill="#fdc94a" /><path d="M5.500 12.500a2 2 0 0 1 .3-4.200A2.700 2.700 0 0 1 11 8a2.200 2.200 0 0 1 0 4.500Z" fill="white" /></> },
  { name: 'Discord', badge: '9+', red: true, running: true, art: <><circle cx="6.500" cy="6.500" r="6.500" fill="#5865f2" /><path d="M3 9.200C3 6 3.700 4.500 4.500 4h4c.8.500 1.500 2 1.500 5.200l-2 .6-.5-.8h-2l-.5.8Z" fill="white" /><circle cx="5.200" cy="7" r=".8" fill="#5865f2" /><circle cx="7.800" cy="7" r=".8" fill="#5865f2" /></> },
  { name: 'Spotify', running: true, art: <><circle cx="6.500" cy="6.500" r="6.500" fill="#1ed05f" /><path d="M3 4.500q4-1 7.200.7M3.300 6.700q3.500-1 6.200.6M3.700 8.700q2.800-.7 5 .5" stroke="#111" strokeWidth="1.100" fill="none" strokeLinecap="round" /></> },
  { name: 'Word', running: true, art: <><rect x="3" width="10" height="12.500" rx="1" fill="#41a5ee" /><path d="M3 4h10v8.500H3Z" fill="#185abd" /><path d="M3 3.500h10v3H3Z" fill="#2b7cd3" /><rect y="3" width="7" height="7" rx=".8" fill="#103f91" /><path d="M1.300 4.800 2.300 8.300 3.500 5.200 4.700 8.300 5.700 4.800" stroke="white" strokeWidth=".9" fill="none" /></> },
  { name: 'Chrome', running: true, art: <><circle cx="6.500" cy="6.500" r="6.500" fill="#fbc116" /><path d="M.9 3.300A6.500 6.500 0 0 1 12.100 3.300H6.500L3.700 8.100Z" fill="#e33b2e" /><path d="M.9 3.300A6.500 6.500 0 0 0 6.500 13l2.800-4.900H3.700Z" fill="#2ba24c" /><circle cx="6.500" cy="6.500" r="3" fill="white" /><circle cx="6.500" cy="6.500" r="2.300" fill="#3f7ee8" /></> },
];

function Taskbar() {
  return (
    <footer className="flex h-[26px] shrink-0 items-center border-t border-[#c2c3cc] bg-[#dedce1] pr-2.5 pl-[11px] text-[#222]">
      <button aria-label="Start" className="grid size-[13px] grid-cols-2 gap-px">
        <i className="bg-[#24b3ee]" /><i className="bg-[#1ba2e6]" /><i className="bg-[#128fdc]" /><i className="bg-[#0b7ed3]" />
      </button>
      <label className="ml-[7px] flex h-[17px] w-[116px] items-center rounded-full bg-[#f4f3f5] pr-0.5 pl-1.5">
        <Search size={8} strokeWidth={2.5} />
        <input type="search" aria-label="Search" placeholder="Search" className="ml-[5px] min-w-0 flex-1 text-[7px] outline-none placeholder:text-[#555]" />
        <svg viewBox="0 0 24 12" className="h-3 w-6" fill="none" strokeLinecap="round">
          <path d="M3 11C2 9 2 7 3 4" stroke="#ef8a2c" strokeWidth="2.500" />
          <path d="M7 2.500c3 2.500 6 3 10 1" stroke="#4d8f2f" strokeWidth="3" />
          <path d="M6 7.500c4 3 11 3 16-1" stroke="#d0302a" strokeWidth="3" />
          <path d="M17 4l4-2M22.500 6V3M3 4 4.500 1.500M6 7 4.500 5" stroke="#3c7a28" strokeWidth="1" />
        </svg>
      </label>
      <div className="ml-0.5 flex h-full w-[422px]">
        {APPS.map((app) => (
          <button
            key={app.name}
            aria-label={app.name}
            className={app.active ? 'relative my-0.5 flex flex-1 items-center justify-center rounded-xs bg-[#f3f2f4]' : 'relative my-0.5 flex flex-1 items-center justify-center'}
          >
            <span className="relative">
              <svg viewBox="0 0 13 13" className="size-[13px]">{app.art}</svg>
              {app.badge && <Badge red={app.red}>{app.badge}</Badge>}
            </span>
            {app.running && <i className={app.active ? 'absolute bottom-0 h-px w-2 rounded bg-[#0b78d0]' : 'absolute bottom-0 h-px w-[3px] rounded bg-[#777]'} />}
          </button>
        ))}
      </div>
      <div className="ml-auto flex items-center">
        <ChevronUp size={8} strokeWidth={2.4} />
        <Cloud size={10} strokeWidth={2.6} className="ml-2" />
        <Wifi size={10} strokeWidth={2.4} className="ml-[7px]" />
        <Volume2 size={10} className="ml-[3px]" />
        <div className="ml-[7px] pt-px text-right text-[6px] leading-[9px]">
          <div>10:57 AM</div>
          <div>1/16/2024</div>
        </div>
        <Bell size={9} fill="currentColor" className="ml-1 text-[#0b4fa8]" />
      </div>
    </footer>
  );
}

export default function App() {
  return (
    <div className="flex h-screen flex-col overflow-hidden font-['Open_Sans',sans-serif]">
      <Defs />
      <TitleBar />
      <div className="flex min-h-0 flex-1">
        <Sidebar />
        <div className="flex min-w-0 flex-1 flex-col">
          <Header />
          <div className="relative flex min-h-0 flex-1">
            <main className="min-w-0 flex-1 overflow-hidden bg-linear-to-b from-[#28548f] via-[#1b4a88] via-50% to-[#0c3b7e] text-white">
              <PlacesBar />
              <div className="mx-auto w-[660px]">
                <div className="flex h-7 items-center pb-0.5">
                  <svg viewBox="0 0 10 10" className="mr-0.5 ml-0.5 size-2.5"><path d="M5 0 10 4v6H6.800V6.500a1.800 1.800 0 0 0-3.600 0V10H0V4Z" fill="white" /></svg>
                  <span className="ml-[5px] text-[8px]">Madison, NH</span>
                  <button className="ml-5 flex h-4 items-center gap-[3px] rounded-full bg-[#ffcb2b] px-1.5 text-[6px] font-semibold text-[#6b4e00]">
                    <TriangleAlert size={8} />
                    Ongoing: Winter Weather - Advisory
                  </button>
                  <button className="ml-auto flex h-[13px] items-center gap-[3px] rounded-xs bg-white/8 px-0.5 text-[6px] font-semibold">
                    <Smartphone size={9} />
                    Live Weather on Mobile
                  </button>
                </div>
                <div className="flex h-36 gap-[7px]">
                  <CurrentWeather />
                  <MapCard />
                  <SunMoon />
                </div>
                <TenDay />
                <HourlyChart />
                <Insights />
              </div>
            </main>
            <button aria-label="Widget" className="absolute top-[115px] right-2 flex h-[41px] w-[39px] items-center rounded-l-full bg-[#1f2123] pl-0.5 shadow-lg">
              <span className="flex size-9 items-center justify-center rounded-full border border-[#5d6a70] bg-[#3a464c]">
                <svg viewBox="0 0 10 13" className="h-[13px] w-2.5"><path d="M5 0 8 4H7l2 3H8l2 4H6v2H4v-2H0l2-4H1l2-3H2Z" fill="#5cb848" /></svg>
              </span>
            </button>
            <div className="flex w-2 flex-col items-center bg-white" aria-hidden="true">
              <svg viewBox="0 0 4 3" className="my-[3px] h-[3px] w-1"><path d="M0 3h4L2 0Z" fill="#8a8a8a" /></svg>
              <i className="h-[405px] w-[5px] rounded-full bg-[#8a8a8a]" />
              <svg viewBox="0 0 4 3" className="mt-auto mb-0.5 h-[3px] w-1"><path d="M0 0h4L2 3Z" fill="#8a8a8a" /></svg>
            </div>
          </div>
        </div>
      </div>
      <Taskbar />
    </div>
  );
}
